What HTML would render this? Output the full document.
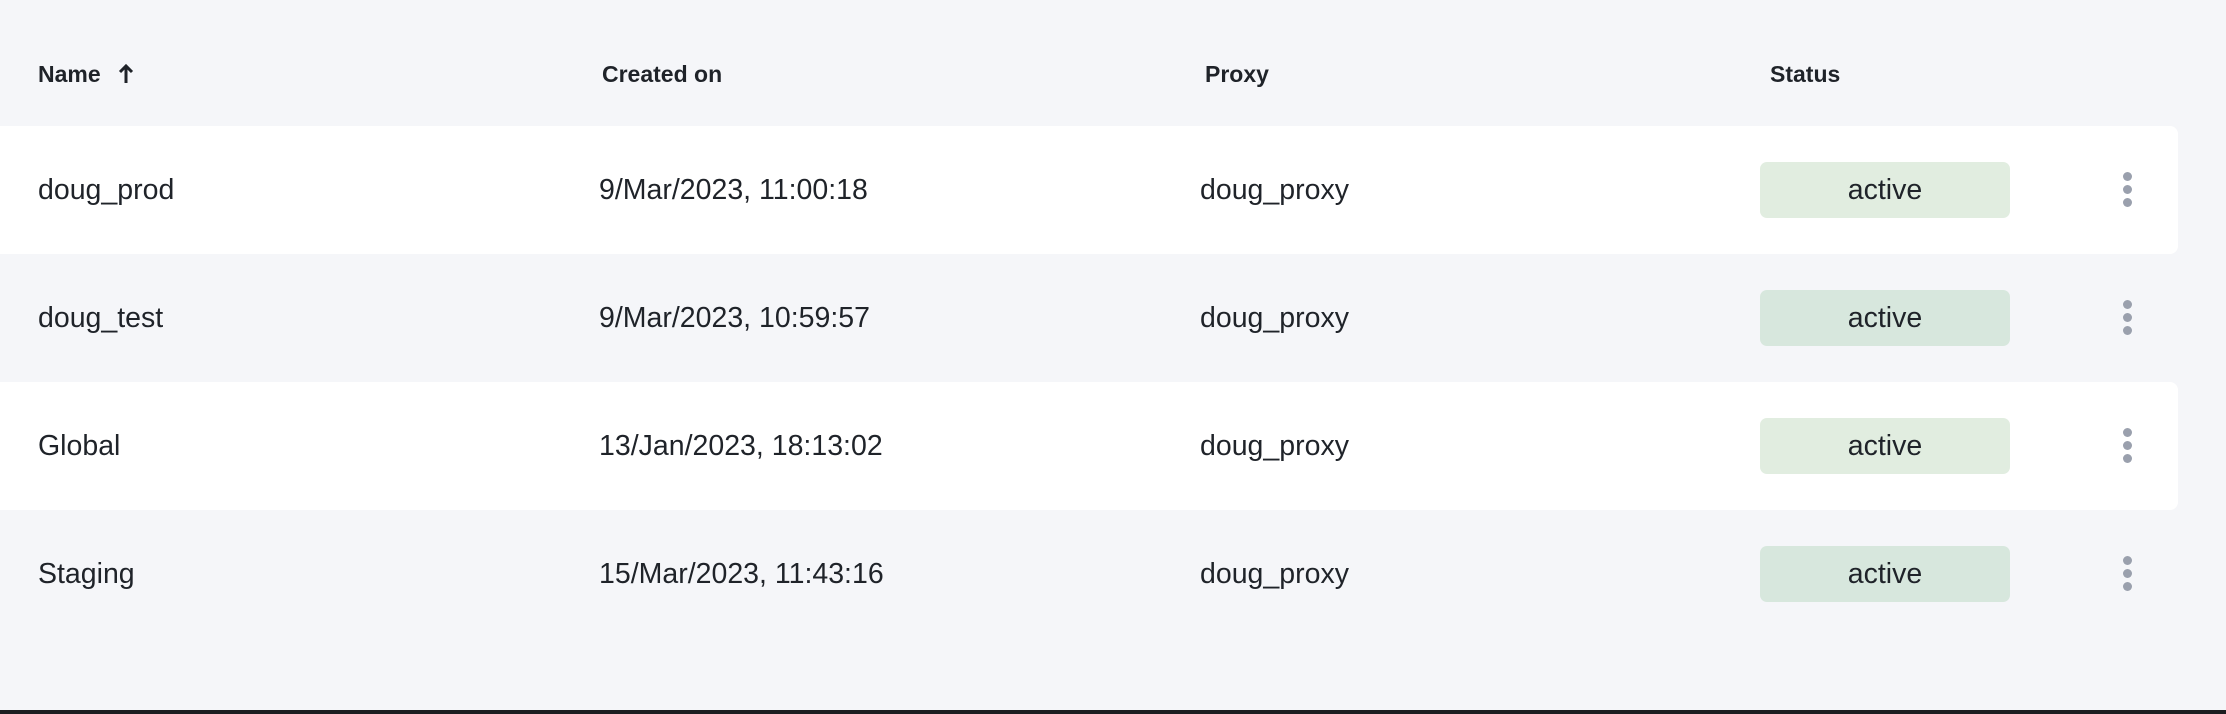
<!DOCTYPE html>
<html><head><meta charset="utf-8"><style>
*{margin:0;padding:0;box-sizing:border-box}
html,body{width:2226px;height:714px;overflow:hidden;background:#f5f6f9;font-family:"Liberation Sans",sans-serif;color:#1f2329}
.h{position:absolute;top:60px;font-size:23px;font-weight:bold;line-height:28px}
.row{position:absolute;left:0;width:2178px;height:128px;border-radius:0 8px 8px 0}
.w{background:#fff}
.c{position:absolute;top:50%;transform:translateY(-50%);font-size:28.5px;line-height:34px;white-space:nowrap}
.b{position:absolute;left:1760px;top:36px;width:250px;height:56px;border-radius:7px;font-size:28.5px;line-height:56px;text-align:center}
.d{position:absolute;left:2123px;width:9px;height:9px;border-radius:50%;background:#9aa0ad}
.bar{position:absolute;left:0;top:710px;width:2226px;height:4px;background:#1c1d20}
</style></head><body>
<div class="h" style="left:38px">Name <svg width="18" height="22" viewBox="0 0 18 22" style="vertical-align:-3px;margin-left:10px"><path d="M9 20V3M3 9l6-6 6 6" stroke="#1f2329" stroke-width="3" fill="none"/></svg></div>
<div class="h" style="left:602px">Created on</div>
<div class="h" style="left:1205px">Proxy</div>
<div class="h" style="left:1770px">Status</div>

<div class="row w" style="top:126px">
<div class="c" style="left:38px">doug_prod</div><div class="c" style="left:599px">9/Mar/2023, 11:00:18</div><div class="c" style="left:1200px">doug_proxy</div>
<div class="b" style="background:#e1ede0">active</div>
<div class="d" style="top:46px"></div><div class="d" style="top:59px"></div><div class="d" style="top:72px"></div></div>

<div class="row" style="top:254px">
<div class="c" style="left:38px">doug_test</div><div class="c" style="left:599px">9/Mar/2023, 10:59:57</div><div class="c" style="left:1200px">doug_proxy</div>
<div class="b" style="background:#d7e7dd">active</div>
<div class="d" style="top:46px"></div><div class="d" style="top:59px"></div><div class="d" style="top:72px"></div></div>

<div class="row w" style="top:382px">
<div class="c" style="left:38px">Global</div><div class="c" style="left:599px">13/Jan/2023, 18:13:02</div><div class="c" style="left:1200px">doug_proxy</div>
<div class="b" style="background:#e1ede0">active</div>
<div class="d" style="top:46px"></div><div class="d" style="top:59px"></div><div class="d" style="top:72px"></div></div>

<div class="row" style="top:510px">
<div class="c" style="left:38px">Staging</div><div class="c" style="left:599px">15/Mar/2023, 11:43:16</div><div class="c" style="left:1200px">doug_proxy</div>
<div class="b" style="background:#d7e7dd">active</div>
<div class="d" style="top:46px"></div><div class="d" style="top:59px"></div><div class="d" style="top:72px"></div></div>

<div class="bar"></div>
</body></html>
